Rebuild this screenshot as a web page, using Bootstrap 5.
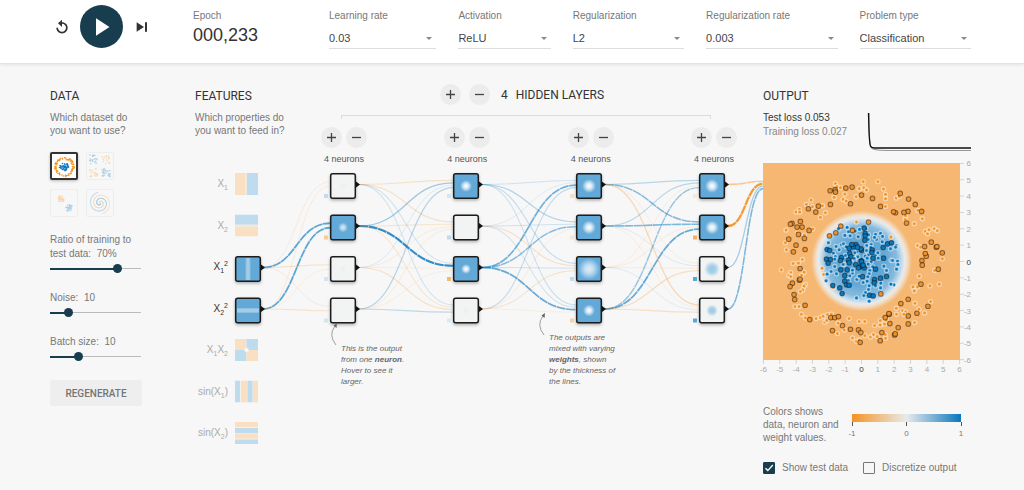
<!DOCTYPE html>
<html lang="en">
<head>
<meta charset="utf-8">
<meta name="viewport" content="width=device-width, initial-scale=1">
<title>Neural network playground</title>
<link href="https://cdn.jsdelivr.net/npm/bootstrap@5.3.0/dist/css/bootstrap.min.css" rel="stylesheet">
<style>
  :root { --ink:#183d4e; --soft:#777; }
  body { background:#f7f7f7; color:var(--soft); font:10px/13px "Liberation Sans",Arial,sans-serif; }
  svg { display:block; overflow:visible; }
  .topbar { background:#fff; min-height:64px; border-bottom:1px solid #e2e2e2; box-shadow:0 1px 3px rgba(0,0,0,.08); padding:5px 53px 0 50px; }
  .transport { width:143px; height:43px; }
  .transport button { border:0; background:none; padding:0; }
  .transport .play-btn { width:43px; height:43px; border-radius:50%; background:var(--ink); margin:0 11px 0 10px; place-items:center; }
  .epoch { width:136px; line-height:14px; padding-top:4px; }
  .epoch strong { display:block; font-size:18px; line-height:24px; font-weight:400; color:#333; }
  .choices { display:grid; grid-template-columns:107fr 92fr 111fr 131fr 111fr; column-gap:22px; }
  .choices label { display:block; line-height:14px; padding-top:4px; }
  .choices select { appearance:none; width:100%; height:21px; margin-top:5px; padding:0; border:0; border-bottom:1px solid #ddd; border-radius:0; color:#444; font-size:11px; background:none; }
  .choices .pick { position:relative; }
  .choices .pick::after { content:""; position:absolute; right:4px; bottom:9px; border:3px solid transparent; border-top-color:#888; border-bottom:0; pointer-events:none; }
  .workspace { display:grid; grid-template-columns:92px minmax(0,1fr) 211px; padding:24px 50px 0; }
  .net { margin-left:53px; }
  h2 { font:400 12px/16px Roboto,sans-serif; color:#333; margin:0 0 7px; }
  .sets { display:grid; grid-template-columns:28px 28px; gap:9px 8px; margin-top:15px; }
  .sets button { width:28px; height:28px; padding:1px; border:1px solid #eee; border-radius:2px; background:none; }
  .sets button.on { border:2px solid #333; background:#fff; padding:0; box-shadow:0 1px 3px rgba(0,0,0,.25); }
  .sets button:not(.on) svg { opacity:.3; }
  .tune label { display:block; line-height:14px; }
  .tune input { appearance:none; display:block; width:91px; height:11px; margin:2px 0 17px; background:linear-gradient(var(--ink),var(--ink)) left center/var(--fill) 2px no-repeat, linear-gradient(#bbb,#bbb) center/100% 1px no-repeat; }
  .tune input::-webkit-slider-thumb { appearance:none; width:9px; height:9px; border-radius:50%; background:var(--ink); }
  .regen { width:92px; height:26px; margin-top:1px; padding:0; border:0; border-radius:2px; background:#eee; color:#757575; font:500 10px Roboto,sans-serif; }
  .round { width:21px; height:21px; padding:0; border:0; border-radius:50%; background:#ececec; display:grid; place-items:center; }
  .round svg { width:11px; height:11px; stroke:#444; stroke-width:1.3; }
  .intro { width:95px; }
  .layerhead { padding-left:150px; height:21px; margin-top:-4px; font:12px Roboto,sans-serif; color:#333; }
  .stack { position:relative; padding-top:4px; }
  .bracket { height:4px; margin:0 52px 0 146px; border:1px solid #ddd; border-bottom:0; }
  .layers { padding:8px 26px 0 126px; }
  .layers p { margin:5px 0 0; line-height:12px; font-size:9px; color:#555; text-align:center; }
  .losses { line-height:14px; height:52px; padding-right:3px; }
  .ramp { height:8px; background:linear-gradient(90deg,#f59322,#e8eaeb,#0877bd); }
  .keys span { width:20px; text-align:center; font-size:8px; line-height:9px; }
  .keys span::before { content:""; display:block; width:1px; height:4px; margin:0 auto 3px; background:#555; }
  .tick { appearance:none; width:12px; height:12px; margin:0; border:1px solid #777; border-radius:1px; background:none; }
  .tick:checked { border-color:var(--ink); background:var(--ink) url("data:image/svg+xml,%3Csvg xmlns='http://www.w3.org/2000/svg' viewBox='0 0 10 10'%3E%3Cpath d='M1.5 5.3l2.3 2.3L8.8 2' fill='none' stroke='white' stroke-width='1.4'/%3E%3C/svg%3E"); }
</style>
</head>
<body>
<header class="topbar d-flex align-items-start">
  <div class="transport d-flex align-items-center">
    <button aria-label="Reset" class="ms-1"><svg width="16" height="16" viewBox="0 0 24 24" fill="#333"><path d="M12 5V1L6 6.5 12 12V7.3c3.4 0 6 2.6 6 5.9s-2.6 6-6 6-6-2.7-6-6H3.5c0 4.7 3.8 8.4 8.5 8.4s8.5-3.7 8.5-8.4S16.7 5 12 5z"/></svg></button>
    <button aria-label="Run" class="play-btn d-grid"><svg width="36" height="36" viewBox="0 0 24 24" fill="#fff"><path d="M8 6.1v11.800l9-5.900z"/></svg></button>
    <button aria-label="Step"><svg width="16" height="16" viewBox="0 0 24 24" fill="#333"><path d="M4 5v14l11-7zM16.500 5h3v14h-3z"/></svg></button>
  </div>
  <div class="epoch">Epoch<strong>000,233</strong></div>
  <div class="choices flex-grow-1">
    <div class="pick"><label for="lr">Learning rate</label><select id="lr"><option>0.03</option></select></div>
    <div class="pick"><label for="act">Activation</label><select id="act"><option>ReLU</option></select></div>
    <div class="pick"><label for="reg">Regularization</label><select id="reg"><option>L2</option></select></div>
    <div class="pick"><label for="rate">Regularization rate</label><select id="rate"><option>0.003</option></select></div>
    <div class="pick"><label for="prob">Problem type</label><select id="prob"><option>Classification</option></select></div>
  </div>
</header>

<main class="workspace">
  <section>
    <h2>DATA</h2>
    <div>Which dataset do<br>you want to use?</div>
    <div class="sets mb-3">
      <button class="on" aria-label="Circle"><svg id="t0" viewBox="0 0 24 24"></svg></button>
      <button aria-label="Exclusive or"><svg id="t1" viewBox="0 0 24 24"></svg></button>
      <button aria-label="Gaussian"><svg id="t2" viewBox="0 0 24 24"></svg></button>
      <button aria-label="Spiral"><svg id="t3" viewBox="0 0 24 24"></svg></button>
    </div>
    <div class="tune"><label for="s1">Ratio of training to<br>test data:&nbsp; 70%</label><input id="s1" type="range" min="10" max="88" value="70" style="--fill:75%"></div>
    <div class="tune"><label for="s2">Noise:&nbsp; 10</label><input id="s2" type="range" min="0" max="60" value="10" style="--fill:20%"></div>
    <div class="tune"><label for="s3">Batch size:&nbsp; 10</label><input id="s3" type="range" min="1" max="32" value="10" style="--fill:30%"></div>
    <button class="regen">REGENERATE</button>
  </section>

  <section class="net">
    <div class="d-flex">
      <div class="intro">
        <h2>FEATURES</h2>
      </div>
      <div class="layerhead d-flex align-items-center">
        <button class="round" aria-label="Add layer"><svg viewBox="0 0 11 11"><path d="M1 5.500h9M5.500 1v9"/></svg></button>
        <button class="round ms-2" aria-label="Remove layer"><svg viewBox="0 0 11 11"><path d="M1 5.500h9"/></svg></button>
        <span style="margin-left:11px">4</span><span class="ms-2">HIDDEN LAYERS</span>
      </div>
    </div>
    <div class="stack">
      <div class="position-absolute top-0 start-0">Which properties do<br>you want to feed in?</div>
      <div class="bracket"></div>
      <div class="layers d-flex justify-content-between" id="layers"></div>
    </div>
    <svg id="diagram" viewBox="0 0 568 290" role="img" aria-label="Network"></svg>
  </section>

  <section>
    <h2>OUTPUT</h2>
    <div class="losses d-flex justify-content-between">
      <div><span style="color:#333">Test loss 0.053</span><br><span style="color:#888">Training loss 0.027</span></div>
      <svg width="105" height="42" viewBox="0 0 105 42" fill="none"><path d="M3 2C3 20 3 33 5 36.500Q7 39.500 20 39.500H105" stroke="#999" stroke-width="1.200"/><path d="M2.500 2C3 19 3 32 4.500 35Q5.500 37 9 37H105" stroke="#111" stroke-width="1.300"/></svg>
    </div>
    <svg id="plot" viewBox="0 0 211 212" role="img" aria-label="Output heat map"></svg>
    <div class="d-flex" style="margin-top:30px">
      <div class="text-nowrap" style="width:79px">Colors shows<br>data, neuron and<br>weight values.</div>
      <div style="margin-top:9px;width:129px">
        <div class="ramp" style="margin:0 10px"></div>
        <div class="keys d-flex justify-content-between"><span>-1</span><span>0</span><span>1</span></div>
      </div>
    </div>
    <div class="d-flex" style="margin-top:17px">
      <div class="d-flex align-items-center" style="width:100px;gap:7px"><input class="tick" type="checkbox" id="c1" checked><label for="c1">Show test data</label></div>
      <div class="d-flex align-items-center" style="gap:7px"><input class="tick" type="checkbox" id="c2"><label for="c2">Discretize output</label></div>
    </div>
  </section>
</main>

<script src="https://cdn.jsdelivr.net/npm/bootstrap@5.3.0/dist/js/bootstrap.bundle.min.js"></script>
<script>
const $ = id => document.getElementById(id);
const BLUE = '#0877bd', ORANGE = '#f59322';

$('layers').innerHTML = Array(4).fill(`<div><div class="d-flex" style="gap:4px">
  <button class="round" aria-label="Add neuron"><svg viewBox="0 0 11 11"><path d="M1 5.500h9M5.500 1v9"/></svg></button>
  <button class="round" aria-label="Remove neuron"><svg viewBox="0 0 11 11"><path d="M1 5.500h9"/></svg></button></div>
  <p>4 neurons</p></div>`).join('');

// Diagram: every node is a 26px tile, rows are 41.5 apart.
const rowY = r => 8 + r * 41.5;
const colX = [135, 258, 381, 504];
let out = `<defs>
  <radialGradient id="glow"><stop offset="0" stop-color="#fff"/><stop offset=".4" stop-color="#fff" stop-opacity=".75"/><stop offset="1" stop-color="#fff" stop-opacity="0"/></radialGradient>
  <radialGradient id="spot"><stop offset="0" stop-color="#9cc9e6"/><stop offset=".45" stop-color="#a9d0e9"/><stop offset="1" stop-color="#a9d0e9" stop-opacity="0"/></radialGradient>
  <filter id="drop" x="-30%" y="-30%" width="170%" height="170%"><feDropShadow dx="0" dy="1.500" stdDeviation="1.500" flood-opacity=".3"/></filter>
</defs>`;

// A link is a horizontal S-curve; |w| sets its width and strength.
function link(x1, y1, x2, y2, w) {
  const m = (x1 + x2) / 2, a = Math.abs(w);
  return `<path d="M${x1} ${y1}C${m} ${y1} ${m} ${y2} ${x2} ${y2}" fill="none" stroke="${w > 0 ? BLUE : ORANGE}"
    stroke-width="${0.9 + a * 1.6}" stroke-opacity="${Math.min(1, 0.08 + a)}" ${a > .3 ? 'stroke-dasharray="9 .6"' : ''}/>`;
}
// weights[layer][source][target]
const weights = [
  [[-.05,.55,-.13,-.06],[-.05,.55,-.04,-.12]],
  [[-.15,-.15,.08,.08],[.28,-.1,.75,-.1],[.04,-.05,-.04,-.16],[.2,-.06,-.04,.16]],
  [[.08,.2,.14,.1],[.03,.08,-.16,.08],[.48,.38,.08,.52],[.14,-.05,-.12,-.03]],
  [[.18,.4,-.04,-.22],[.18,.42,.04,-.04],[-.04,-.06,-.05,.03],[.32,.52,-.18,-.16]],
  [[-.4],[-.85],[.25],[.42]]
];
weights.forEach((layer, l) => layer.forEach((targets, s) => targets.forEach((w, t) => {
  const n = layer.length;
  const x1 = l ? colX[l - 1] + 29 : 68;
  const y1 = rowY(l ? s : s + 2) + 11.5;
  const x2 = l < 4 ? colX[l] : 568;
  const y2 = (l < 4 ? rowY(t) + 11 : 20) + (s - (n - 1) / 2) * (n > 2 ? 2.4 : 4.5);
  out += link(x1, y1, x2, y2, w);
})));

function tile(x, y, fill, inner) {
  return `<g filter="url(#drop)"><rect x="${x + .7}" y="${y + .7}" width="24.600" height="24.600" rx="2" fill="${fill}" stroke="#1c1c1c" stroke-width="1.500"/></g>${inner}
    <path d="M${x + 26} ${y + 8.5}l4 3-4 3z" fill="#111"/>`;
}
const disc = (x, y, r, id, o = 1) => `<circle cx="${x + 13}" cy="${y + 13}" r="${r}" fill="url(#${id})" opacity="${o}"/>`;

// Inputs
const P = '#fae0c2', B = '#bfdcef';
const label = (y, t, on) => `<text x="33" y="${y + 14}" text-anchor="end" font-size="10" fill="${on ? '#333' : '#aaa'}">${t}</text>`;
const sub = n => `<tspan dy="3" font-size="7">${n}</tspan>`;
const sup = n => `<tspan dy="-7" font-size="7">${n}</tspan>`;
const r = (x, y, w, h, f) => `<rect x="${x}" y="${y}" width="${w}" height="${h}" fill="${f}"/>`;
const off = (y, inner) => `<svg x="40" y="${y}" width="23" height="22" viewBox="0 0 23 22" style="overflow:hidden">${inner}</svg>`;
const end = '<tspan dy="-3">)</tspan>';
out += label(rowY(0), 'X' + sub(1)) + off(rowY(0), r(0,0,11,22,P) + r(10,0,2,22,'#edeae4') + r(12,0,11,22,B));
out += label(rowY(1), 'X' + sub(2)) + off(rowY(1), r(0,0,23,11,B) + r(0,10,23,2,'#edeae4') + r(0,12,23,10,P));
out += label(rowY(2), 'X' + sub(1) + sup(2), 1) + tile(40, rowY(2), '#62a9d8', r(50.5,rowY(2)+2,5,22,'#8bbfe1') + r(51.5,rowY(2)+2,3,22,'#a3cce7'));
out += label(rowY(3), 'X' + sub(2) + sup(2), 1) + tile(40, rowY(3), '#62a9d8', r(42,rowY(3)+10.5,22,5,'#8bbfe1') + r(42,rowY(3)+11.5,22,3,'#a3cce7'));
out += label(rowY(4), `X${sub(1)}<tspan dy="-3">X</tspan>${sub(2)}`)
  + off(rowY(4), r(0,0,11.5,11,P) + r(11.5,0,11.5,11,B) + r(0,11,11.5,11,B) + r(11.5,11,11.5,11,P) + '<circle cx="11.500" cy="11" r="3" fill="url(#glow)"/>');
out += label(rowY(5), 'sin(X' + sub(1) + end) + off(rowY(5), r(0,0,23,22,'#f4f1ec') + r(0,0,5,22,B) + r(6,0,6,22,P) + r(12.5,0,5,22,B) + r(18,0,5,22,P));
out += label(rowY(6), 'sin(X' + sub(2) + end) + off(rowY(6), r(0,0,23,22,'#f4f1ec') + r(0,0,23,5,P) + r(0,6,23,5,B) + r(0,11.5,23,5,P) + r(0,17.5,23,5,B));

// Neurons: [fill, glow kind, radius, opacity, bias colour]
const W = '#f2f4f4', D = '#62a9d8';
const neurons = [
  [[W,'spot',4,.1,'#bfdcef'],[D,'glow',5,.75,'#f8cb94'],[W,'spot',4,.1,'#cfe5ef'],[W,'spot',0,0,'#cfe5ef']],
  [[D,'glow',6,1,'#d3e6f2'],[W,'spot',0,0,'#bfdcef'],[D,'glow',5,1,'#f8b869'],[W,'spot',4,.1,'#d8eaf2']],
  [[D,'glow',7,1,'#f9dfbf'],[D,'glow',7,1,'#f3e6d6'],[D,'glow',11,.8,'#bfdcef'],[D,'glow',6,1,'#f9d2a4']],
  [[D,'glow',7,1,'#f4e8da'],[D,'glow',7,1,'#f8b05c'],[W,'spot',8,1,'#5da5d6'],[W,'spot',6,1,'#5da5d6']]
];
neurons.forEach((layer, l) => layer.forEach(([fill, id, rad, o, bias], n) => {
  const x = colX[l], y = rowY(n);
  out += tile(x, y, fill, disc(x, y, rad, id, o)) + r(x - 6, y + 21, 4, 4, bias);
}));

// Callouts
const note = (x, y, lines) => `<text font-size="8" font-style="italic" fill="#666">` + lines.map((t, i) => `<tspan x="${x}" y="${y + i * 11}">${t}</tspan>`).join('') + '</text>';
out += note(146, 186, ['This is the output', 'from one <tspan font-weight="700">neuron</tspan>.', 'Hover to see it', 'larger.']);
out += note(354, 175, ['The outputs are', 'mixed with varying', '<tspan font-weight="700">weights</tspan>, shown', 'by the thickness of', 'the lines.']);
const arrow = (x, y) => `<path d="M${x} ${y}q-8 -10 -1 -19" fill="none" stroke="#888" stroke-width=".8"/><path d="M${x + 1} ${y - 22}l-.5 5-3-2.500z" fill="#666"/>`;
out += arrow(141, 180) + arrow(349, 170);
$('diagram').innerHTML = out;

// Output plot
const testOuter = [226,122,241,119,242,126,273,114,292,111,320,135,353,145,227,163,287,161,191,168,161,176,183,186,377,169,436,130,461,147,481,163,500,184,459,184,447,187,422,188,416,185,455,219,112,220,107,222,137,214,127,231,142,231,163,241,131,253,102,267,149,265,124,285,151,298,116,305,136,355,134,390,136,387,113,399,106,409,118,433,120,448,151,465,165,508,228,502,240,502,251,499,263,526,233,541,287,537,311,539,318,547,316,576,376,571,381,547,391,502,403,492,402,490,405,520,430,532,419,554,421,551,438,460,460,447,460,497,486,489,519,468,460,521,498,402,501,331,502,345,514,318,511,310,509,289,529,276,544,291,546,289,562,308,550,357,341,216,258,228,243,248,224,257,293,241,378,431];
const trainOuter = [242,101,247,110,325,95,369,95,386,117,392,133,392,146,392,169,313,116,327,113,335,120,304,140,270,132,265,148,274,153,238,142,257,113,169,150,155,163,173,170,203,167,134,178,124,186,135,186,212,188,197,202,94,240,174,237,149,255,128,250,92,278,95,299,143,328,115,340,131,339,80,359,108,367,102,375,108,379,141,375,148,366,152,403,148,408,144,419,137,424,121,469,133,469,140,492,152,503,184,505,197,502,205,498,218,493,230,492,210,516,216,511,283,505,313,514,330,514,250,519,268,539,248,550,293,563,305,573,313,569,330,556,347,560,356,553,367,559,391,553,392,564,359,526,376,524,389,521,376,511,394,510,425,492,424,474,443,481,452,485,447,492,479,517,480,459,492,477,509,488,527,454,474,410,488,410,478,422,525,407,553,402,493,378,539,361,562,326,488,286,497,291,511,244,518,251,522,239,538,236,547,242,502,206,478,221,451,208,424,144,433,139,489,181,452,197,408,261,305,216,202,354,207,373,237,411];
const testInner = [328,234,331,250,331,258,330,270,303,283,296,290,291,283,283,294,320,300,352,299,351,307,355,324,386,324,385,292,398,281,410,278,285,310,288,320,281,330,283,338,260,322,257,331,217,298,225,301,215,327,227,328,220,339,258,359,277,359,270,376,270,393,275,404,283,405,234,406,255,413,262,430,319,332,320,334,303,343,317,349,311,353,328,353,325,345,362,357,323,379,359,388,358,398,377,384,395,379,344,435,355,437,318,296,308,291];
const trainInner = [251,236,277,232,281,245,301,243,314,238,270,256,286,257,221,278,244,289,260,284,266,281,333,236,341,254,362,253,377,250,383,259,365,268,359,262,340,268,382,275,407,296,424,286,422,291,409,330,413,331,428,333,429,343,425,357,387,348,395,361,378,399,377,413,362,407,343,407,341,418,332,427,327,436,305,443,343,453,214,392,417,404,408,402,229,364,217,372,240,349,245,371,236,309,242,319,240,327,296,315,307,305,335,301,340,315,331,318,337,324,349,335,340,342,354,350,345,361,343,371,339,380,306,388,313,378,325,397,337,393,293,369,285,377,281,391,293,360,268,342,272,316,253,299,274,290,362,315,369,308,370,324,300,330,336,286,349,283,265,343,310,260,300,308,348,292,309,320,298,325];
const dots = (a, c, rad, extra) => a.map((v, i) => i % 2 ? '' : `<circle cx="${v}" cy="${a[i + 1]}" r="${rad}" fill="${c}" ${extra}/>`).join('');
const halo = 'stroke="#fff" stroke-width="4" stroke-opacity=".5"', rim = 'stroke="#000" stroke-width="3" stroke-opacity=".45"';
let p = `<defs><radialGradient id="heat" gradientUnits="userSpaceOnUse" cx="98.500" cy="98" r="98">
  <stop offset="0" stop-color="#549fd0"/><stop offset=".25" stop-color="#66a9d5"/><stop offset=".36" stop-color="#86bade"/><stop offset=".41" stop-color="#c3dbeb"/><stop offset=".44" stop-color="#e8eaeb"/><stop offset=".465" stop-color="#f0e0ce"/><stop offset=".515" stop-color="#f5b771"/><stop offset="1" stop-color="#f5b771"/></radialGradient></defs>
  <rect width="197" height="197" fill="url(#heat)"/>
  <svg width="197" height="197" viewBox="25 39 590 590">${dots(trainOuter, ORANGE, 6, halo)}${dots(trainInner, BLUE, 6, halo)}${dots(testOuter, '#f0912a', 7, rim)}${dots(testInner, BLUE, 7, rim)}</svg>`;
for (let i = -6; i <= 6; i++) {
  const at = 98.5 + i * 16.35, c = i ? '#aaa' : '#333';
  p += `<path d="M${at} 197v4M197 ${197 - at}h4" stroke="#ccc" stroke-width=".8"/>
    <text x="${at}" y="209" text-anchor="middle" font-size="8" fill="${c}">${i}</text><text x="208" y="${200 - at}" text-anchor="end" font-size="8" fill="${c}">${i}</text>`;
}
$('plot').innerHTML = p;

// Dataset thumbnails, from a small repeatable generator
let seed = 7;
const rnd = () => (seed = (seed * 16807) % 2147483647) / 2147483647;
const dot = (x, y, c) => `<circle cx="${x}" cy="${y}" r=".8" fill="${c}"/>`;
const thumbs = ['', '', '', ''];
for (let i = 0; i < 80; i++) {
  const a = rnd() * 6.283, q = rnd();
  thumbs[0] += dot(12.5 + Math.cos(a) * (7.8 + q * 2.2), 13 + Math.sin(a) * (7.5 + q * 2.2), ORANGE) + (i % 2 ? dot(12.5 + Math.cos(a) * q * 5, 13 + Math.sin(a) * q * 4, BLUE) : '');
  const x = (rnd() < .5 ? 1 : 14) + rnd() * 9, y = (rnd() < .5 ? 1 : 14) + rnd() * 9;
  thumbs[1] += dot(x, y, (x < 12) === (y < 12) ? BLUE : ORANGE);
  const e = i % 2, g = rnd() * 3.4;
  thumbs[2] += dot((e ? 17 : 9) + Math.cos(a) * g, (e ? 17 : 8) + Math.sin(a) * g, e ? BLUE : ORANGE);
}
for (let i = 8; i < 128; i++) {
  const a = i * .085, R = i * .085;
  thumbs[3] += `<circle cx="${12 + Math.cos(a) * R}" cy="${12 + Math.sin(a) * R}" r=".5" fill="${BLUE}"/><circle cx="${12 - Math.cos(a) * R}" cy="${12 - Math.sin(a) * R}" r=".5" fill="${ORANGE}"/>`;
}
thumbs.forEach((t, i) => $('t' + i).innerHTML = t);
</script>
</body>
</html>
